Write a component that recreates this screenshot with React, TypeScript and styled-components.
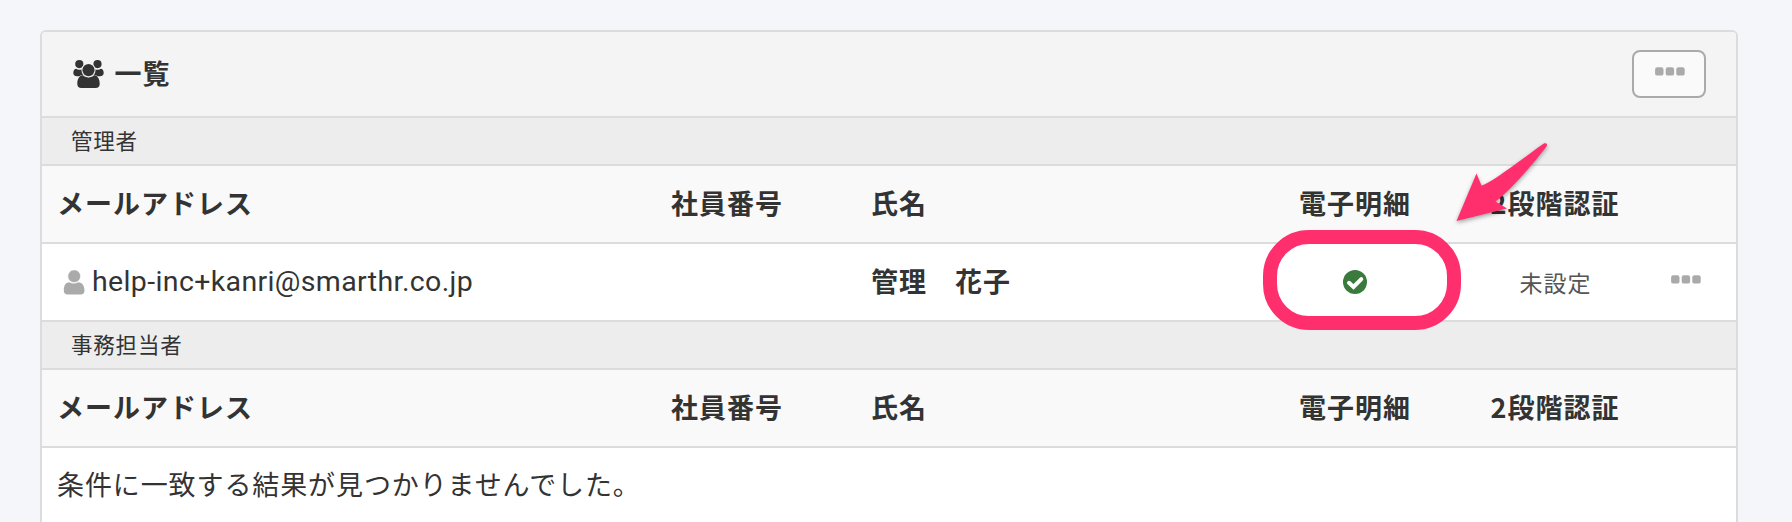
import React from "react";
import styled, { createGlobalStyle } from "styled-components";

const GlobalStyle = createGlobalStyle`
  * { box-sizing: border-box; }
  html, body { margin: 0; height: 100%; overflow: hidden; }
  body {
    background: #f4f6fa;
    color: #333;
    font-family: "Noto Sans CJK JP", sans-serif;
  }
`;

const LINE = "2px solid #dcdcdc";

const Page = styled.main`
  position: relative;
  width: 1792px;
  height: 522px;
  padding: 30px 54px 0 40px;
  overflow: hidden;
`;

const Panel = styled.section`
  height: 560px;
  border: ${LINE};
  border-radius: 6px;
  background: #fff;
  overflow: hidden;
`;

const PanelHeader = styled.header`
  display: flex;
  align-items: center;
  height: 86px;
  padding: 0 30px 0 31px;
  border-bottom: ${LINE};
  background: #f4f4f4;
`;

const PanelTitle = styled.h1`
  display: flex;
  align-items: center;
  gap: 10.5px;
  flex: 1;
  margin: 0;
  font-size: 27px;
  font-weight: 700;
  letter-spacing: 1px;
  line-height: 40px;
`;

const TitleText = styled.span`
  padding-bottom: 3px;
`;

const MenuButton = styled.button`
  display: flex;
  justify-content: center;
  width: 74px;
  height: 48px;
  padding: 15px 0 0 1px;
  border: 2px solid #aaa;
  border-radius: 8px;
  background: #fafafa;
`;

const GroupBar = styled.h2`
  height: 48px;
  margin: 0;
  padding: 0 29px;
  border-bottom: ${LINE};
  background: #ededed;
  font-size: 21.5px;
  font-weight: 400;
  letter-spacing: 0.8px;
  line-height: 44px;
`;

const Row = styled.div<{ $head?: boolean }>`
  display: grid;
  grid-template-columns: 613px 200px 400px 200px 200px 1fr;
  align-items: center;
  height: 78px;
  border-bottom: ${LINE};
  background: ${(p) => (p.$head ? "#f9f9f9" : "#fff")};
`;

const Cell = styled.div<{ $center?: boolean; $bold?: boolean }>`
  display: flex;
  align-items: center;
  justify-content: ${(p) => (p.$center ? "center" : "flex-start")};
  padding: 0 ${(p) => (p.$center ? 0 : 16)}px ${(p) => (p.$bold ? 3 : 0)}px;
  font-size: 27px;
  font-weight: ${(p) => (p.$bold ? 700 : 400)};
  letter-spacing: 1px;
  line-height: 40px;
  white-space: pre;

  ${Row} > &:first-child {
    padding-left: 15px;
  }
`;

const Email = styled.span`
  margin-left: 7px;
  font-family: Roboto, "Noto Sans CJK JP", sans-serif;
  font-size: 28.5px;
  letter-spacing: 0.37px;
`;

const Status = styled.span`
  padding-left: 1px;
  color: #555;
  font-size: 23px;
`;

const Empty = styled.p`
  margin: 0;
  padding: 16px 15px;
  font-size: 27px;
  letter-spacing: 0.9px;
  line-height: 40px;
`;

const Dots = styled.svg`
  display: block;
  margin-bottom: 5px;
`;

const Ring = styled.div`
  position: absolute;
  left: 1263px;
  top: 230px;
  width: 198px;
  height: 100px;
  border: 14px solid #ff2f6e;
  border-radius: 46px;
`;

const Arrow = styled.svg`
  position: absolute;
  left: 1450px;
  top: 136px;
  filter: drop-shadow(0 2px 2px rgba(0, 0, 0, 0.35));
`;

const DotsIcon = () => (
  <Dots width="30" height="9" viewBox="0 0 30 9" fill="#aaa">
    <rect x="0.1" y="0.2" width="8.4" height="8.4" rx="2.2" />
    <rect x="10.7" y="0.2" width="8.4" height="8.4" rx="2.2" />
    <rect x="21.3" y="0.2" width="8.4" height="8.4" rx="2.2" />
  </Dots>
);

const UsersIcon = () => (
  <svg width="31" height="28" viewBox="0 0 31 28" fill="#333">
    <circle cx="6.3" cy="4.1" r="4.1" />
    <circle cx="24.5" cy="4.1" r="4.1" />
    <path d="M3 8.8c2 1.3 4.6 1.3 6.3.1-.5 2.8.5 5 2.2 6.5-2 .1-3.800.8-5 .8H4C1.500 16.200.3 15 .3 12.800c0-1.800.8-3.600 2.700-4Z" />
    <path d="M28 8.800c-2 1.300-4.600 1.300-6.300.1.500 2.800-.5 5-2.200 6.500 2 .1 3.800.8 5 .8H27c2.500 0 3.700-1.200 3.700-3.400 0-1.800-.8-3.600-2.700-4Z" />
    <path
      d="M9.700 15.300c3.300 2.800 8.300 2.800 11.600 0 3.600.3 5.400 4 5.400 8.600 0 2.700-1.600 4.100-4 4.100H8.300c-2.400 0-4-1.400-4-4.100 0-4.600 1.800-8.300 5.400-8.600Z"
      stroke="#f4f4f4"
      strokeWidth="1"
      paintOrder="stroke"
    />
    <circle cx="15.500" cy="10.100" r="6.100" stroke="#f4f4f4" strokeWidth="2" paintOrder="stroke" />
  </svg>
);

const UserIcon = () => (
  <svg width="28" height="25" viewBox="-1 0 28 25" fill="#aaa">
    <path d="M11.200 12.200c2.600 1.600 6.400 1.600 9 0 3.800.1 6.300 3.300 6.300 8.400 0 2.600-1.500 4-3.700 4H9.700c-2.300 0-3.900-1.400-3.900-4 0-5.100 1.800-8.300 5.400-8.400Z" />
    <circle cx="16.200" cy="6.200" r="6.400" fill="#aaa" stroke="#fff" strokeWidth="0.700" />
  </svg>
);

const CheckIcon = () => (
  <svg width="24" height="24" viewBox="0 0 24 24">
    <circle cx="12" cy="12" r="12" fill="#3b7a3d" />
    <path
      d="M6 12.800l4.500 4.200 7.800-7.900"
      fill="none"
      stroke="#fff"
      strokeWidth="4"
      strokeLinecap="round"
      strokeLinejoin="miter"
    />
  </svg>
);

const columns = [
  { label: "メールアドレス" },
  { label: "社員番号" },
  { label: "氏名" },
  { label: "電子明細", center: true },
  { label: "2段階認証", center: true },
];

const HeadRow = () => (
  <Row $head>
    {columns.map((c) => (
      <Cell key={c.label} $bold $center={c.center}>
        {c.label}
      </Cell>
    ))}
  </Row>
);

export default function App() {
  return (
    <>
      <GlobalStyle />
      <Page>
        <Panel>
          <PanelHeader>
            <PanelTitle>
              <UsersIcon />
              <TitleText>一覧</TitleText>
            </PanelTitle>
            <MenuButton aria-label="メニュー">
              <DotsIcon />
            </MenuButton>
          </PanelHeader>
          <GroupBar>管理者</GroupBar>
          <HeadRow />
          <Row>
            <Cell>
              <UserIcon />
              <Email>help-inc+kanri@smarthr.co.jp</Email>
            </Cell>
            <Cell />
            <Cell $bold>管理　花子</Cell>
            <Cell $center>
              <CheckIcon />
            </Cell>
            <Cell $center>
              <Status>未設定</Status>
            </Cell>
            <Cell>
              <DotsIcon />
            </Cell>
          </Row>
          <GroupBar>事務担当者</GroupBar>
          <HeadRow />
          <Empty>条件に一致する結果が見つかりませんでした。</Empty>
        </Panel>
        <Ring />
        <Arrow width="110" height="100" viewBox="1450 136 110 100" fill="#ff2f6e">
          <path d="M1456.500 221 L1476.500 173.500 L1481.500 185.500 C1492 183 1523 158 1543.500 143.800 C1546 142.500 1548 144 1546.500 146.500 C1532 165 1513 188 1495.500 201.500 L1507 208.500 Z" />
        </Arrow>
      </Page>
    </>
  );
}
